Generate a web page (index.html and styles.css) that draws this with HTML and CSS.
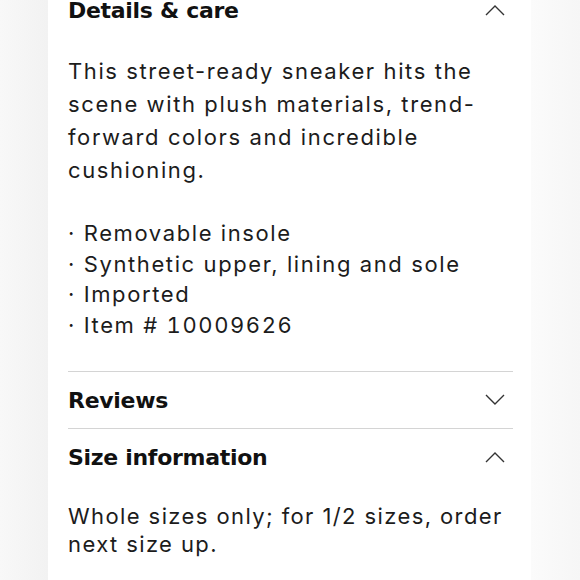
FILE: index.html
```html
<!DOCTYPE html>
<html lang="en">
<head>
<meta charset="utf-8">
<title>Details &amp; care</title>
<link rel="stylesheet" href="styles.css">
</head>
<body>
<div class="page">
  <div class="band band-left"></div>
  <main class="card">
    <section class="acc">
      <div class="acc-head acc-head-first">
        <h2 class="acc-title">Details &amp; care</h2>
        <svg class="chev" width="20" height="12" viewBox="0 0 20 12"><polyline points="1,11 10,2 19,11" fill="none" stroke="#333" stroke-width="1.4"/></svg>
      </div>
      <div class="acc-body">
        <p class="desc">This street-ready sneaker hits the scene with plush materials, trend-forward colors and incredible cushioning.</p>
        <ul class="bullets">
          <li>· Removable insole</li>
          <li>· Synthetic upper, lining and sole</li>
          <li>· Imported</li>
          <li>· Item # <span class="num">10009626</span></li>
        </ul>
      </div>
    </section>
    <section class="acc acc-divided">
      <div class="acc-head">
        <h2 class="acc-title">Reviews</h2>
        <svg class="chev" width="20" height="12" viewBox="0 0 20 12"><polyline points="1,1 10,10 19,1" fill="none" stroke="#333" stroke-width="1.4"/></svg>
      </div>
    </section>
    <section class="acc acc-divided">
      <div class="acc-head">
        <h2 class="acc-title">Size information</h2>
        <svg class="chev" width="20" height="12" viewBox="0 0 20 12"><polyline points="1,11 10,2 19,11" fill="none" stroke="#333" stroke-width="1.4"/></svg>
      </div>
      <div class="acc-body">
        <p class="size-note">Whole sizes only; for 1/2 sizes, order next size up.</p>
      </div>
    </section>
  </main>
  <div class="band band-right"></div>
</div>
</body>
</html>
```

FILE: styles.css
```css
* { box-sizing: border-box; }
html, body { margin: 0; padding: 0; }
body {
  width: 580px;
  height: 580px;
  overflow: hidden;
  background: #ffffff;
  font-family: Inter, "Liberation Sans", sans-serif;
  color: #1c1c1c;
}
.page {
  display: flex;
  height: 580px;
}
.band { flex: none; }
.band-left {
  width: 48px;
  background: linear-gradient(to right, #f8f8f8, #f2f2f2);
}
.band-right {
  flex: 1;
  background: linear-gradient(to right, #fbfbfb, #f6f6f6);
}
.card {
  flex: none;
  width: 483px;
  background: #ffffff;
  padding: 0 18px 0 20px;
  margin-top: -18px;
}
.acc-divided { border-top: 1px solid #d4d4d4; }
.acc-head {
  height: 56px;
  display: flex;
  align-items: center;
  justify-content: space-between;
}
.acc-title {
  margin: 0;
  font-family: "DejaVu Sans", Inter, sans-serif;
  font-size: 22px;
  font-weight: 700;
  letter-spacing: -0.3px;
  color: #111;
}
.chev { margin-right: 8px; flex: none; }
.acc-body { padding-bottom: 31px; }
.desc {
  margin: 17px 0 0;
  font-size: 22px;
  line-height: 33px;
  letter-spacing: 1.6px;
}
.bullets {
  list-style: none;
  margin: 31px 0 0;
  padding: 0;
  font-size: 22px;
  line-height: 30.5px;
  letter-spacing: 1.6px;
}
.num { font-variant-numeric: tabular-nums; }
.size-note {
  margin: 18px 0 0;
  font-size: 22px;
  line-height: 27.5px;
  letter-spacing: 1.4px;
}
```
